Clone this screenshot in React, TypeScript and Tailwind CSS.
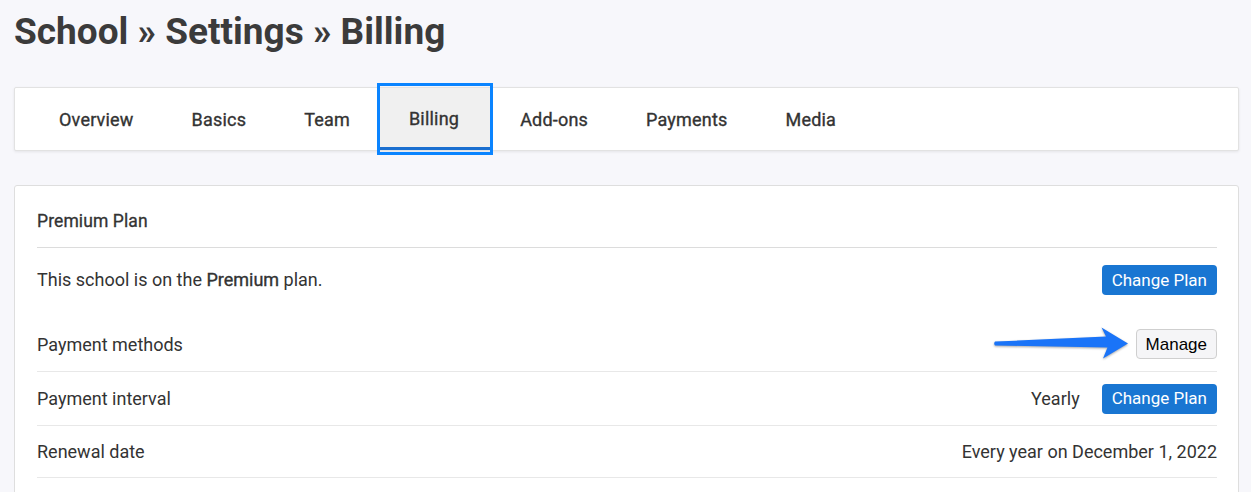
const tabs = ['Overview', 'Basics', 'Team', 'Billing', 'Add-ons', 'Payments', 'Media']

function Arrow() {
  return (
    <svg
      className="absolute right-[85px] top-[7px] drop-shadow-[0_1px_1px_rgba(0,0,0,0.35)]"
      width="142"
      height="38"
      viewBox="0 0 142 38"
    >
      <path
        d="M5 17.6 L116 12.6 L111.5 3.6 L138 19.4 L113 34.4 L117.5 23.4 L5 21.4 Q3.4 19.5 5 17.6 Z"
        fill="#1a74f8"
      />
    </svg>
  )
}

function BlueButton() {
  return (
    <button className="h-[30px] px-[10px] rounded-[4px] bg-[#1976d2] text-white text-[17px] leading-none">
      Change Plan
    </button>
  )
}

export default function App() {
  return (
    <div className="min-h-[492px] bg-[#f7f7fb] pl-[14px] pr-[12px] font-['Roboto',sans-serif] text-[#333]">
      <h1 className="pt-[13px] text-[37px] leading-[38px] font-bold text-[#3b3b3b]">
        School » Settings » Billing
      </h1>

      <div className="mt-[36px] h-[64px] border border-[#e2e2e2] bg-white rounded-[2px] shadow-[0_1px_3px_rgba(0,0,0,0.08)] pl-4 flex gap-[2px]">
        {tabs.map((t) =>
          t === 'Billing' ? (
            <div
              key={t}
              className="relative flex items-center pl-[29px] pr-[31px] bg-[#f0f0f0] border-b-[3px] border-[#1a6fd0] text-[18px] tracking-[0.2px] [-webkit-text-stroke:0.35px_#333333]"
            >
              <span className="pt-[1px]">{t}</span>
              <span className="absolute -left-[3px] -right-[3px] -top-[5px] -bottom-[8px] border-[3px] border-[#0a84ff]" />
            </div>
          ) : (
            <div
              key={t}
              className="flex items-center px-7 text-[18px] tracking-[0.2px] [-webkit-text-stroke:0.35px_#333333]"
            >
              {t}
            </div>
          ),
        )}
      </div>

      <div className="mt-[34px] border border-[#dedede] rounded-[3px] bg-white pl-[22px] pr-[21px] pb-6 text-[18px]">
        <div className="pt-[23px] pb-[14px] border-b border-[#dcdcdc] text-[17.5px] leading-6 tracking-[0.1px] [-webkit-text-stroke:0.3px_#333333]">
          Premium Plan
        </div>

        <div className="pt-[17px] pb-[22px] flex items-center justify-between">
          <span className="-mt-[2px]">
            This school is on the{' '}
            <span className="[-webkit-text-stroke:0.35px_#333333]">Premium</span> plan.
          </span>
          <BlueButton />
        </div>

        <div className="relative h-[55px] border-b border-[#e8e8e8] flex items-center justify-between">
          <span>Payment methods</span>
          <Arrow />
          <button className="h-[30px] px-[9px] rounded-[4px] border border-[#cfcfcf] bg-[#f5f5f7] text-black text-[17px] leading-none font-['Liberation_Sans',sans-serif]">
            Manage
          </button>
        </div>

        <div className="h-[54px] border-b border-[#e8e8e8] flex items-center justify-between">
          <span>Payment interval</span>
          <div className="flex items-center gap-[22px]">
            <span>Yearly</span>
            <BlueButton />
          </div>
        </div>

        <div className="h-[52px] border-b border-[#e8e8e8] flex items-center justify-between">
          <span>Renewal date</span>
          <span>Every year on December 1, 2022</span>
        </div>
      </div>
    </div>
  )
}
